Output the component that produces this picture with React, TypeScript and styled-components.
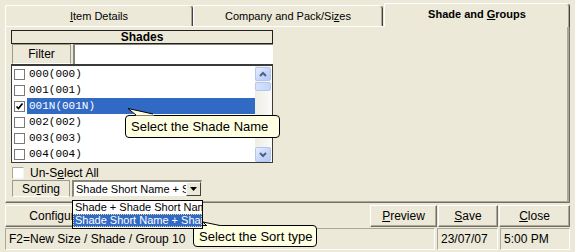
import React from "react";
import styled, { createGlobalStyle } from "styled-components";

const GlobalStyle = createGlobalStyle`
  html, body { margin: 0; padding: 0; background: #ECE9D8; }
  body { font-family: "Liberation Sans", Arial, sans-serif; font-size: 11px; color: #000; }
  * { box-sizing: border-box; }
`;

const Window = styled.div`
  position: relative;
  width: 575px;
  height: 252px;
  overflow: hidden;
  background: #ECE9D8;
  display: flex;
  flex-direction: column;
`;

const TabStrip = styled.div`
  display: flex;
  align-items: flex-end;
  height: 23px;
  margin-top: 3px;
  padding: 0 5px;
`;

const Tab = styled.div<{ $w: number; $active?: boolean }>`
  position: relative;
  z-index: ${(p) => (p.$active ? 2 : 1)};
  width: ${(p) => p.$w}px;
  height: ${(p) => (p.$active ? 24 : 21)}px;
  margin-bottom: ${(p) => (p.$active ? -1 : 0)}px;
  margin-left: ${(p) => (p.$active ? 1 : 0)}px;
  background: #ECE9D8;
  border-top: 1px solid #fff;
  border-left: 1px solid #fff;
  border-right: 1px solid #404040;
  box-shadow: inset -1px 0 #ACA899;
  border-top-right-radius: 4px;
  border-top-left-radius: 2px;
  display: flex;
  align-items: center;
  justify-content: center;
  padding-bottom: ${(p) => (p.$active ? 3 : 1)}px;
  font-size: 11px;
  font-weight: ${(p) => (p.$active ? "bold" : "normal")};
`;

const Panel = styled.div`
  margin: 0 5px;
  height: 177px;
  border-top: 1px solid #fff;
  border-left: 1px solid #fff;
  border-right: 1px solid #716F64;
  border-bottom: 1px solid #716F64;
  box-shadow: inset -2px -1px #ACA899;
  padding: 3px 0 0 5px;
`;

const Group = styled.div`
  width: 262px;
  display: flex;
  flex-direction: column;
`;

const GroupHeader = styled.div`
  height: 14px;
  border: 1px solid #202020;
  display: flex;
  align-items: center;
  justify-content: center;
  font-weight: bold;
  font-size: 12px;
`;

const FieldRow = styled.div<{ $h: number }>`
  display: flex;
  align-items: stretch;
  height: ${(p) => p.$h}px;
  gap: 2px;
  padding-left: 1px;
`;

const FieldLabel = styled.div<{ $w: number }>`
  width: ${(p) => p.$w}px;
  border-top: 1px solid #9D9A8A;
  border-left: 1px solid #9D9A8A;
  border-right: 1px solid #9D9A8A;
  border-bottom: 1px solid #fff;
  display: flex;
  align-items: center;
  justify-content: center;
  font-size: 12px;
`;

const TextInput = styled.div`
  flex: 1;
  background: #fff;
  border-left: 2px solid #8A877A;
  border-top: 1px solid #8A877A;
`;

const ListBox = styled.div`
  height: 99px;
  display: flex;
  background: #fff;
  border: 1px solid #3A3A3A;
  border-top-width: 2px;
  overflow: hidden;
`;

const Rows = styled.div`
  flex: 1;
  display: flex;
  flex-direction: column;
`;

const Row = styled.div`
  height: 16px;
  flex: none;
  display: flex;
  align-items: center;
  padding-left: 2px;
`;

const Check = styled.div`
  width: 11px;
  height: 11px;
  flex: none;
  border: 1px solid #7A7A7A;
  background: #fff;
  display: flex;
  align-items: center;
  justify-content: center;
`;

const RowText = styled.div<{ $sel?: boolean }>`
  flex: 1;
  height: 16px;
  margin-left: 2px;
  padding-left: 2px;
  display: flex;
  align-items: center;
  font-family: "Liberation Mono", "Courier New", monospace;
  font-size: 11px;
  background: ${(p) => (p.$sel ? "#316AC5" : "transparent")};
  color: ${(p) => (p.$sel ? "#fff" : "#000")};
`;

const ScrollBar = styled.div`
  width: 17px;
  flex: none;
  display: flex;
  flex-direction: column;
  padding: 1px 1px 0 0;
  background: linear-gradient(to right, #EEEDE5, #FBFBF8);
`;

const ScrollBtn = styled.div<{ $h: number }>`
  height: ${(p) => p.$h}px;
  flex: none;
  border: 1px solid #B4C6F0;
  border-radius: 2px;
  background: linear-gradient(135deg, #E6EEFE 0%, #C9D8FB 50%, #B4C8F6 100%);
  display: flex;
  align-items: center;
  justify-content: center;
`;

const Thumb = styled.div`
  height: 9px;
  margin-top: 1px;
  border: 1px solid #B4C6F0;
  border-radius: 2px;
  background: linear-gradient(to right, #D6E2FC, #C4D5FA);
`;

const Track = styled.div`
  flex: 1;
`;

const CheckRow = styled.div`
  height: 17px;
  display: flex;
  align-items: center;
  padding-left: 1px;
  padding-top: 2px;
  gap: 6px;
  font-size: 12px;
`;

const SunkenCheck = styled.div`
  width: 12px;
  height: 12px;
  background: #fff;
  border-top: 1px solid #ACA899;
  border-left: 1px solid #ACA899;
  border-right: 1px solid #F5F4EE;
  border-bottom: 1px solid #F5F4EE;
`;

const Combo = styled.div`
  width: 130px;
  background: #fff;
  border-top: 2px solid #8A877A;
  border-left: 2px solid #8A877A;
  border-right: 1px solid #ECE9D8;
  border-bottom: 1px solid #ECE9D8;
  display: flex;
  align-items: stretch;
  overflow: hidden;
`;

const ComboText = styled.div`
  flex: 1;
  white-space: nowrap;
  overflow: hidden;
  padding-left: 2px;
  display: flex;
  align-items: center;
  font-size: 11px;
`;

const ComboBtn = styled.div`
  width: 15px;
  flex: none;
  background: #ECE9D8;
  border-top: 1px solid #fff;
  border-left: 1px solid #fff;
  border-right: 1px solid #404040;
  border-bottom: 1px solid #404040;
  display: flex;
  align-items: center;
  justify-content: center;
`;

const ButtonRow = styled.div`
  display: flex;
  height: 22px;
  margin-top: 2px;
  padding: 0 5px;
  gap: 1px;
`;

const Spacer = styled.div`
  flex: 1;
`;

const Button = styled.div<{ $w: number }>`
  width: ${(p) => p.$w}px;
  background: #ECE9D8;
  border-top: 1px solid #fff;
  border-left: 1px solid #fff;
  border-right: 1px solid #716F64;
  border-bottom: 1px solid #716F64;
  box-shadow: inset -1px -1px #ACA899;
  display: flex;
  align-items: center;
  justify-content: center;
  font-size: 12px;
`;

const StatusBar = styled.div`
  display: flex;
  height: 22px;
  margin-top: 1px;
  padding: 0 5px;
  gap: 2px;
`;

const StatusCell = styled.div<{ $w?: number }>`
  ${(p) => (p.$w ? `width: ${p.$w}px;` : "flex: 1;")}
  border-top: 1px solid #ACA899;
  border-left: 1px solid #ACA899;
  border-right: 1px solid #fff;
  border-bottom: 1px solid #fff;
  display: flex;
  align-items: center;
  padding-left: 3px;
  font-size: 12px;
  white-space: nowrap;
`;

const DropList = styled.div`
  position: absolute;
  left: 72px;
  top: 200px;
  width: 131px;
  height: 29px;
  background: #fff;
  border: 1px solid #000;
  z-index: 5;
  overflow: hidden;
  display: flex;
  flex-direction: column;
`;

const DropItem = styled.div<{ $sel?: boolean }>`
  height: 13px;
  flex: none;
  padding-left: 2px;
  white-space: nowrap;
  overflow: hidden;
  font-size: 11px;
  line-height: 13px;
  background: ${(p) => (p.$sel ? "#316AC5" : "#fff")};
  color: ${(p) => (p.$sel ? "#fff" : "#000")};
  outline: ${(p) => (p.$sel ? "1px dotted #E8D28A" : "none")};
  outline-offset: -1px;
`;

const Balloon = styled.div<{ $x: number; $y: number; $w: number; $h: number }>`
  position: absolute;
  left: ${(p) => p.$x}px;
  top: ${(p) => p.$y}px;
  width: ${(p) => p.$w}px;
  height: ${(p) => p.$h}px;
  background: #FFFFE1;
  border: 1px solid #000;
  border-radius: 4px;
  display: flex;
  align-items: center;
  padding-left: 5px;
  font-size: 13px;
  white-space: nowrap;
  z-index: 4;
`;

const Pointer = styled.svg<{ $x: number; $y: number }>`
  position: absolute;
  left: ${(p) => p.$x}px;
  top: ${(p) => p.$y}px;
  z-index: 6;
  overflow: visible;
`;

const tabs = [
  { w: 188, label: <span><u>I</u>tem Details</span> },
  { w: 190, label: <span>Company and Pack/Si<u>z</u>es</span> },
  { w: 186, label: <span>Shade and <u>G</u>roups</span>, active: true },
];

const shades = [
  { t: "000(000)" },
  { t: "001(001)" },
  { t: "001N(001N)", sel: true },
  { t: "002(002)" },
  { t: "003(003)" },
  { t: "004(004)" },
];

const Arrow = ({ up }: { up?: boolean }) => (
  <svg width="8" height="6" viewBox="0 0 8 6">
    <path
      d={up ? "M1 5 L4 2 L7 5" : "M1 1 L4 4 L7 1"}
      fill="none"
      stroke="#4D6185"
      strokeWidth="2"
    />
  </svg>
);

const Tick = () => (
  <svg width="9" height="9" viewBox="0 0 9 9">
    <path d="M1.5 4.5 L3.5 6.5 L7.5 1.5" fill="none" stroke="#000" strokeWidth="1.7" />
  </svg>
);

export default function App() {
  return (
    <>
      <GlobalStyle />
      <Window>
        <TabStrip>
          {tabs.map((t, i) => (
            <Tab key={i} $w={t.w} $active={t.active}>
              {t.label}
            </Tab>
          ))}
        </TabStrip>
        <Panel>
          <Group>
            <GroupHeader>Shades</GroupHeader>
            <FieldRow $h={20}>
              <FieldLabel $w={59}>Filter</FieldLabel>
              <TextInput />
            </FieldRow>
            <ListBox>
              <Rows>
                {shades.map((s, i) => (
                  <Row key={i}>
                    <Check>{s.sel && <Tick />}</Check>
                    <RowText $sel={s.sel}>{s.t}</RowText>
                  </Row>
                ))}
              </Rows>
              <ScrollBar>
                <ScrollBtn $h={14}>
                  <Arrow up />
                </ScrollBtn>
                <Thumb />
                <Track />
                <ScrollBtn $h={15}>
                  <Arrow />
                </ScrollBtn>
              </ScrollBar>
            </ListBox>
            <CheckRow>
              <SunkenCheck />
              <span>
                Un-S<u>e</u>lect All
              </span>
            </CheckRow>
            <FieldRow $h={17}>
              <FieldLabel $w={58}>
                <span>So<u>r</u>ting</span>
              </FieldLabel>
              <Combo>
                <ComboText>Shade Short Name + Shade</ComboText>
                <ComboBtn>
                  <svg width="7" height="4" viewBox="0 0 7 4">
                    <path d="M0 0 H7 L3.5 4 Z" fill="#000" />
                  </svg>
                </ComboBtn>
              </Combo>
            </FieldRow>
          </Group>
        </Panel>
        <ButtonRow>
          <Button $w={120}>
            <span>Confi<u>g</u>uration</span>
          </Button>
          <Spacer />
          <Button $w={67}>
            <span><u>P</u>review</span>
          </Button>
          <Button $w={60}>
            <span><u>S</u>ave</span>
          </Button>
          <Button $w={71}>
            <span><u>C</u>lose</span>
          </Button>
        </ButtonRow>
        <StatusBar>
          <StatusCell>F2=New Size / Shade / Group 10</StatusCell>
          <StatusCell $w={61}>23/07/07</StatusCell>
          <StatusCell $w={70}>5:00 PM</StatusCell>
        </StatusBar>

        <Balloon $x={125} $y={115} $w={155} $h={23}>
          Select the Shade Name
        </Balloon>
        <Pointer $x={125} $y={107} width="32" height="10" viewBox="0 0 32 10">
          <polygon points="3,1.5 28,7 29,8.6 11,8.6" fill="#FFFFE1" />
          <polyline points="11,8 3,1.5 28,7" fill="none" stroke="#000" strokeWidth="1" />
        </Pointer>

        <DropList>
          <DropItem>Shade + Shade Short Name</DropItem>
          <DropItem $sel>Shade Short Name + Shade</DropItem>
        </DropList>

        <Balloon $x={193} $y={225} $w={124} $h={22}>
          Select the Sort type
        </Balloon>
        <Pointer $x={200} $y={220} width="24" height="8" viewBox="0 0 24 8">
          <polygon points="3,2 20,5.5 21,6.6 7,6.6" fill="#FFFFE1" />
          <polyline points="7,6 3,2 20,5.5" fill="none" stroke="#000" strokeWidth="1" />
        </Pointer>
      </Window>
    </>
  );
}
